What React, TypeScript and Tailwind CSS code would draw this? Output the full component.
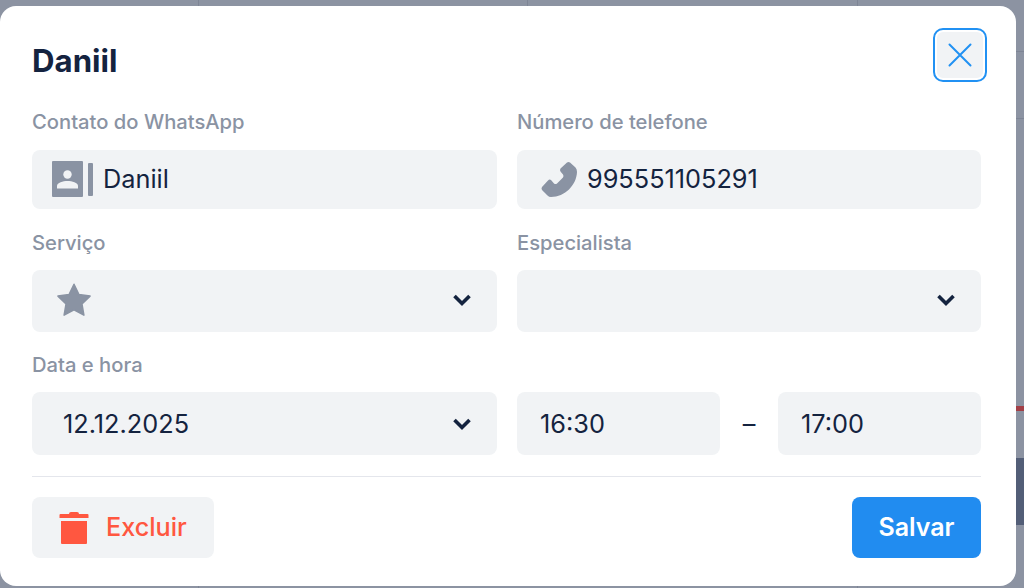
import React from "react";

const Chevron = () => (
  <svg width="20" height="20" viewBox="0 0 20 20" fill="none" className="shrink-0">
    <path d="M2.500 6 L10 13.500 L17.500 6" stroke="#14233f" strokeWidth="3.600" />
  </svg>
);

const Label = ({ children }: { children: React.ReactNode }) => (
  <div className="h-[27px] text-[20.2px] leading-[25px] font-medium text-[#8a93a3]">{children}</div>
);

export default function App() {
  return (
    <div className="relative w-[1024px] h-[588px] overflow-hidden bg-[#8c93a2] font-['Inter',sans-serif]">
      <div className="absolute left-[198px] top-0 h-[6px] w-px bg-[#7e8595]" />
      <div className="absolute left-[527px] top-0 h-[6px] w-px bg-[#7e8595]" />
      <div className="absolute left-[857px] top-0 h-[6px] w-px bg-[#7e8595]" />
      <div className="absolute left-[1016px] top-[51px] h-px w-[8px] bg-[#7e8595]" />
      <div className="absolute left-[1016px] top-[118px] h-px w-[8px] bg-[#7e8595]" />
      <div className="absolute left-[1016px] top-[406px] h-[5px] w-[8px] bg-[#a33f47]" />
      <div className="absolute left-[1016px] top-[458px] h-[67px] w-[8px] bg-[#535e77]" />
      <div className="absolute left-[198px] top-[586px] h-[2px] w-px bg-[#7e8595]" />
      <div className="absolute left-[857px] top-[586px] h-[2px] w-px bg-[#7e8595]" />

      <div className="relative mt-[6px] flex h-[580px] w-[1016px] flex-col rounded-[16px] bg-white pl-[32px] pr-[35px] pt-[22px]">
        <div className="flex h-[54px] items-center justify-between">
          <h1 className="text-[31.200px] font-bold leading-[38px] mt-[11px] text-[#14233f]">Daniil</h1>
          <button className="-mr-[6px] flex h-[54px] w-[54px] items-center justify-center rounded-[10px] border-2 border-[#2191f3] bg-[#f1f3f5] ring-2 ring-inset ring-white">
            <svg width="24" height="24" viewBox="0 0 24 24" fill="none">
              <path d="M1.500 1.500 L22.500 22.500 M22.500 1.500 L1.500 22.500" stroke="#2191f3" strokeWidth="2" strokeLinecap="round" />
            </svg>
          </button>
        </div>

        <div className="mt-[27px] grid grid-cols-[465px_464px] gap-x-[20px]">
          <div>
            <Label>Contato do WhatsApp</Label>
            <div className="mt-[14px] flex h-[59px] items-center rounded-[8px] bg-[#f1f3f5] pb-[2px] pl-[20px] text-[25.300px] text-[#14233f]">
              <svg width="41" height="36" viewBox="0 0 41 36" className="shrink-0">
                <rect x="0" y="0" width="31" height="36" rx="1" fill="#8a93a3" />
                <rect x="36" y="2" width="5" height="33" rx="1" fill="#8a93a3" />
                <circle cx="15.500" cy="13.500" r="4.200" fill="#f1f3f5" />
                <path d="M5 27.500 v-2.500 c0-3.500 6-5 10.500-5 s10.500 1.500 10.500 5 v2.500 z" fill="#f1f3f5" />
              </svg>
              <span className="ml-[10px]">Daniil</span>
            </div>
          </div>
          <div>
            <Label>Número de telefone</Label>
            <div className="mt-[14px] flex h-[59px] items-center rounded-[8px] bg-[#f1f3f5] pb-[2px] pl-[24px] text-[25.300px] text-[#14233f]">
              <svg width="36" height="36" viewBox="0 0 36 36" className="shrink-0">
                <path d="M26 1.500 Q27.500 .5 29 1.500 L34.500 6.500 Q36 8 36 11 C35.500 24 24 36 10 36 Q8 36 6.500 34.500 L1 29 Q0 27.500 1 26 L7 19.500 Q8.500 18 10 19 L13 22.500 Q14.500 23.500 16 22.500 L22 16.500 Q23 15 22 13.500 L19.500 10.500 Q18.500 9 19.500 7.500 Z" fill="#8a93a3" />
              </svg>
              <span className="ml-[10px]">995551105291</span>
            </div>
          </div>

          <div className="mt-[21px]">
            <Label>Serviço</Label>
            <div className="mt-[13px] flex h-[62px] items-center justify-between rounded-[8px] bg-[#f1f3f5] pb-[2px] pl-[24px] pr-[25px]">
              <svg width="36" height="36" viewBox="0 0 24 24" className="shrink-0">
                <path d="M12 1.500 l3.300 6.900 7.400 1 -5.400 5.200 1.300 7.500 -6.600-3.600 -6.600 3.600 1.300-7.500 -5.400-5.200 7.400-1z" fill="#8a93a3" stroke="#8a93a3" strokeWidth="1" strokeLinejoin="round" />
              </svg>
              <Chevron />
            </div>
          </div>
          <div className="mt-[21px]">
            <Label>Especialista</Label>
            <div className="mt-[13px] flex h-[62px] items-center justify-end rounded-[8px] bg-[#f1f3f5] pb-[2px] pr-[25px]">
              <Chevron />
            </div>
          </div>

          <div className="mt-[20px]">
            <Label>Data e hora</Label>
            <div className="mt-[13px] flex h-[63px] items-center justify-between rounded-[8px] bg-[#f1f3f5] pl-[31px] pr-[25px] text-[25.300px] text-[#14233f]">
              <span>12.12.2025</span>
              <Chevron />
            </div>
          </div>
          <div className="mt-[60px] flex items-center justify-between text-[25.300px] text-[#14233f]">
            <div className="flex h-[63px] w-[203px] items-center rounded-[8px] bg-[#f1f3f5] pl-[23px]">16:30</div>
            <span>–</span>
            <div className="flex h-[63px] w-[203px] items-center rounded-[8px] bg-[#f1f3f5] pl-[23px]">17:00</div>
          </div>
        </div>

        <div className="mt-[21px] h-px w-[949px] bg-[#e4e6ec]" />

        <div className="mt-[20px] flex items-center justify-between">
          <button className="flex h-[61px] w-[182px] items-center rounded-[8px] bg-[#f1f3f5] pl-[27px] text-[25.200px] font-medium text-[#ff5740]">
            <svg width="30" height="33" viewBox="0 0 30 33" className="shrink-0">
              <path d="M10 3 Q10 1 12 1 H18 Q20 1 20 3 H28.500 Q29.500 3 29.500 4 V7 H.5 V4 Q.5 3 1.500 3 Z" fill="#ff5740" />
              <path d="M2 10 H28 V32 Q28 33 27 33 H3 Q2 33 2 32 Z" fill="#ff5740" />
            </svg>
            <span className="ml-[17px]">Excluir</span>
          </button>
          <button className="h-[61px] w-[129px] rounded-[8px] bg-[#218cf0] text-[25px] font-semibold text-white">Salvar</button>
        </div>
      </div>
    </div>
  );
}
